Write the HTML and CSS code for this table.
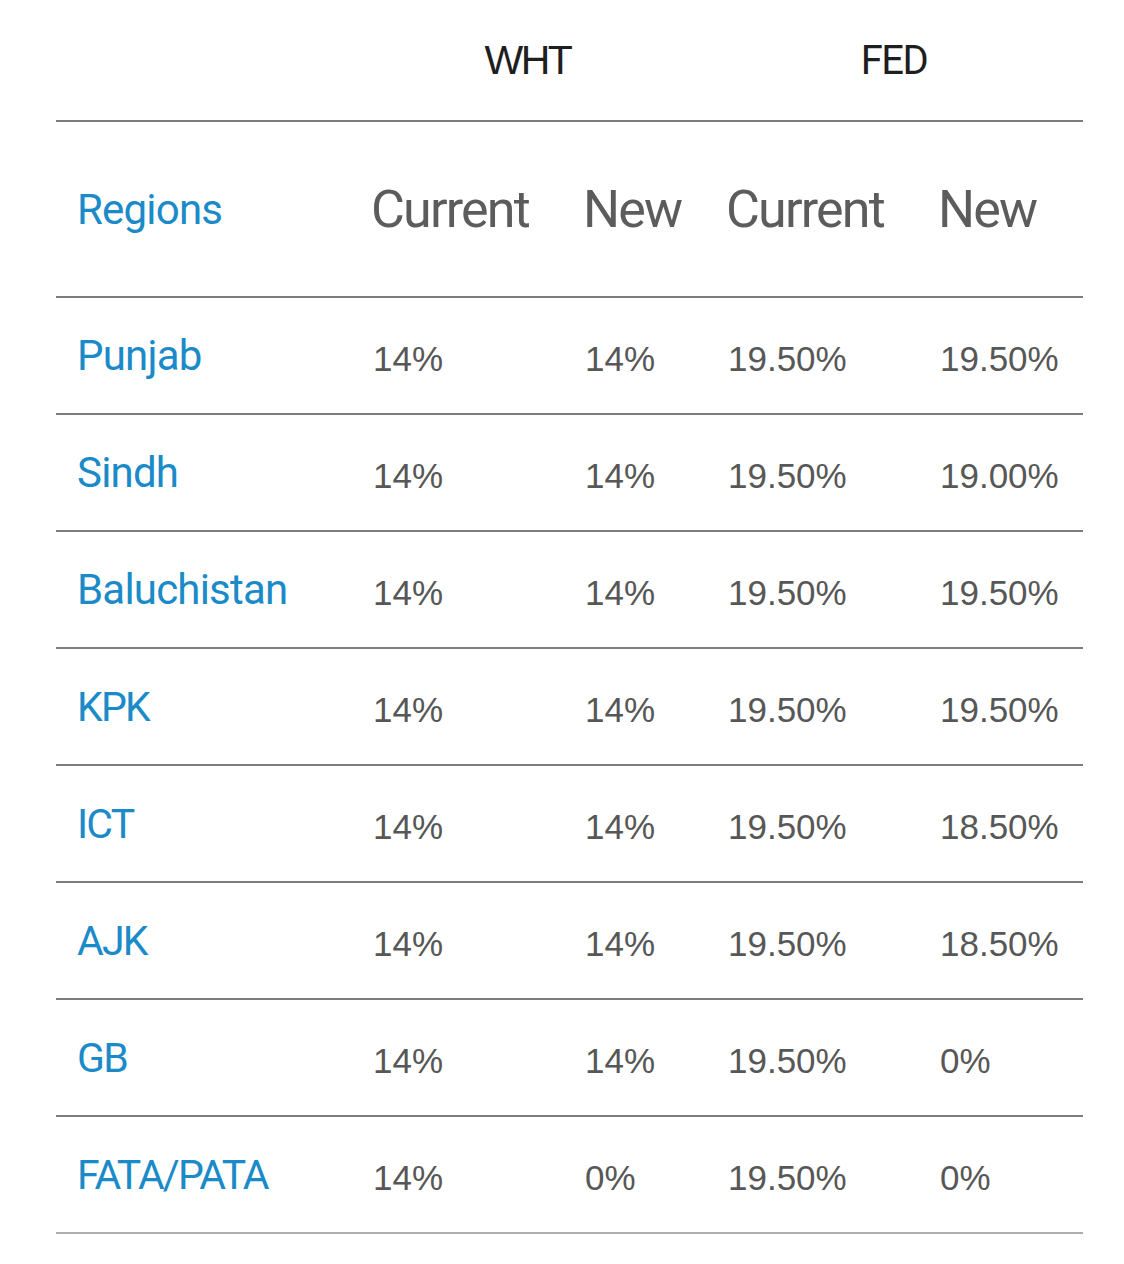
FILE: index.html
```html
<!DOCTYPE html>
<html lang="en">
<head>
<meta charset="utf-8">
<title>WHT / FED rates by region</title>
<link rel="stylesheet" href="styles.css">
</head>
<body>
<div class="wrap">
  <div class="rates">
    <div class="row group">
      <div class="cell"></div>
      <div class="cell span2 grp">WHT</div>
      <div class="cell span2 grp fed">FED</div>
    </div>
    <div class="row head">
      <div class="cell region">Regions</div>
      <div class="cell colhead">Current</div>
      <div class="cell colhead">New</div>
      <div class="cell colhead">Current</div>
      <div class="cell colhead">New</div>
    </div>
    <div class="row data">
      <div class="cell region">Punjab</div>
      <div class="cell num">14%</div><div class="cell num">14%</div><div class="cell num">19.50%</div><div class="cell num">19.50%</div>
    </div>
    <div class="row data">
      <div class="cell region">Sindh</div>
      <div class="cell num">14%</div><div class="cell num">14%</div><div class="cell num">19.50%</div><div class="cell num">19.00%</div>
    </div>
    <div class="row data">
      <div class="cell region">Baluchistan</div>
      <div class="cell num">14%</div><div class="cell num">14%</div><div class="cell num">19.50%</div><div class="cell num">19.50%</div>
    </div>
    <div class="row data">
      <div class="cell region abbr">KPK</div>
      <div class="cell num">14%</div><div class="cell num">14%</div><div class="cell num">19.50%</div><div class="cell num">19.50%</div>
    </div>
    <div class="row data">
      <div class="cell region abbr">ICT</div>
      <div class="cell num">14%</div><div class="cell num">14%</div><div class="cell num">19.50%</div><div class="cell num">18.50%</div>
    </div>
    <div class="row data">
      <div class="cell region abbr">AJK</div>
      <div class="cell num">14%</div><div class="cell num">14%</div><div class="cell num">19.50%</div><div class="cell num">18.50%</div>
    </div>
    <div class="row data">
      <div class="cell region abbr">GB</div>
      <div class="cell num">14%</div><div class="cell num">14%</div><div class="cell num">19.50%</div><div class="cell num">0%</div>
    </div>
    <div class="row data last">
      <div class="cell region abbr">FATA/PATA</div>
      <div class="cell num">14%</div><div class="cell num">0%</div><div class="cell num">19.50%</div><div class="cell num">0%</div>
    </div>
  </div>
</div>
</body>
</html>
```
FILE: styles.css
```css
html, body {
  margin: 0;
  padding: 0;
  background: #ffffff;
}

.wrap {
  padding: 0 0 0 56px;
}

.rates {
  width: 1027px;
}

.row {
  display: grid;
  grid-template-columns: 294px 212px 143px 212px 166px;
  align-items: center;
  box-sizing: border-box;
  border-bottom: 2px solid #7d7d7d;
}

.group { height: 122px; }
.head { height: 176px; }
.data { height: 117px; }
.data.last { height: 117px; border-bottom-color: #adadad; }

.cell {
  padding-left: 23px;
  white-space: nowrap;
}

.span2 {
  grid-column: span 2;
  padding-left: 0;
  text-align: center;
}

.grp {
  font-family: "Liberation Sans", Arial, sans-serif;
  font-size: 41px;
  letter-spacing: -2.5px;
  color: #1e1e1e;
}

.grp.fed {
  font-family: Roboto, "Liberation Sans", sans-serif;
  font-size: 40px;
  letter-spacing: -1.5px;
}

.region {
  font-family: Roboto, "Liberation Sans", sans-serif;
  font-size: 42px;
  letter-spacing: -0.8px;
  color: #1a8ac8;
  padding-left: 21px;
}

.region.abbr {
  font-size: 41px;
  letter-spacing: -1.8px;
}

.colhead {
  font-family: Roboto, "Liberation Sans", sans-serif;
  font-size: 52px;
  letter-spacing: -1.8px;
  color: #5c5c5c;
  padding-left: 21px;
}

.num {
  font-family: "Liberation Sans", Arial, sans-serif;
  font-size: 35px;
  color: #575757;
  padding-top: 6px;
}
```
